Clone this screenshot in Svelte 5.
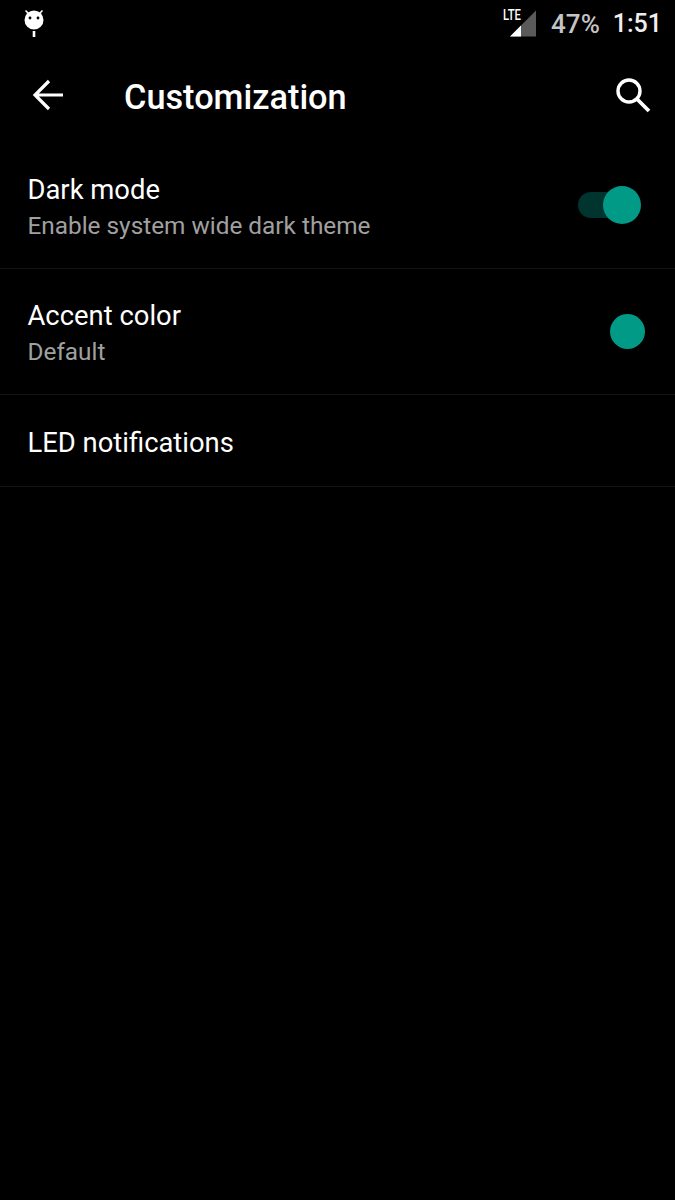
<script>
  const rows = [
    { title: 'Dark mode', sub: 'Enable system wide dark theme', control: 'switch' },
    { title: 'Accent color', sub: 'Default', control: 'dot' },
    { title: 'LED notifications' }
  ];
</script>

<div class="screen">
  <header class="status">
    <svg class="droid" width="24" height="32" viewBox="0 0 24 32" aria-hidden="true">
      <path d="M3.500 1.500 L7.500 5.500 M20.500 1.500 L16.500 5.500" stroke="#fff" stroke-width="1.600" fill="none" />
      <circle cx="12" cy="11" r="9.500" fill="#fff" />
      <circle cx="8" cy="9" r="1.400" fill="#000" />
      <circle cx="16" cy="9" r="1.400" fill="#000" />
      <rect x="10.700" y="22" width="2.600" height="6" fill="#fff" />
    </svg>
    <div class="status-right">
      <div class="signal">
        <span class="lte">LTE</span>
        <svg width="28" height="27" viewBox="0 0 28 27" aria-hidden="true">
          <path d="M1 26.500 L27 0.500 V26.500 Z" fill="#5a5a5a" />
          <path d="M1 26.500 L12 15.500 V26.500 Z" fill="#fff" />
        </svg>
      </div>
      <span class="battery">47%</span>
      <span class="clock">1:51</span>
    </div>
  </header>

  <div class="toolbar">
    <svg class="back" width="34" height="34" viewBox="0 0 34 34" aria-hidden="true">
      <path d="M3 17 H31 M17 3 L3 17 L17 31" stroke="#fff" stroke-width="3.200" fill="none" />
    </svg>
    <h1>Customization</h1>
    <svg class="search" width="38" height="38" viewBox="0 0 38 38" aria-hidden="true">
      <circle cx="15" cy="15" r="11" stroke="#fff" stroke-width="3.400" fill="none" />
      <path d="M23 23 L35 35" stroke="#fff" stroke-width="3.800" fill="none" />
    </svg>
  </div>

  <div class="list">
    {#each rows as row}
      <div class="row" class:single={!row.sub}>
        <div class="text">
          <div class="title">{row.title}</div>
          {#if row.sub}<div class="sub">{row.sub}</div>{/if}
        </div>
        {#if row.control === 'switch'}
          <div class="switch"><span class="track"></span><span class="thumb"></span></div>
        {:else if row.control === 'dot'}
          <span class="dot"></span>
        {/if}
      </div>
    {/each}
  </div>
</div>

<style>
  :global(body) {
    margin: 0;
    background: #000;
  }
  .screen {
    width: 675px;
    height: 1200px;
    background: #000;
    color: #fff;
    font-family: Roboto, "Liberation Sans", sans-serif;
    overflow: hidden;
  }
  .status {
    height: 47px;
    display: flex;
    justify-content: space-between;
    align-items: flex-start;
    padding: 0 13px 0 22px;
    box-sizing: border-box;
  }
  .droid {
    margin-top: 9px;
  }
  .status-right {
    display: flex;
    align-items: center;
    margin-top: 10px;
    height: 28px;
  }
  .signal {
    position: relative;
    width: 34px;
    height: 28px;
    display: flex;
    justify-content: flex-end;
  }
  .lte {
    position: absolute;
    left: 0;
    top: -1px;
    font-size: 14.500px;
    line-height: 14px;
    font-weight: 500;
    transform: scaleX(0.78);
    transform-origin: left center;
  }
  .battery {
    margin-left: 14px;
    font-size: 26px;
    line-height: 28px;
    font-weight: 500;
    color: #c4c4c4;
  }
  .clock {
    margin-left: 13px;
    font-size: 25px;
    line-height: 28px;
    font-weight: 500;
    color: #eee;
  }
  .toolbar {
    height: 96px;
    display: flex;
    align-items: center;
    padding: 0 23px 0 32px;
  }
  h1 {
    flex: 1;
    margin: 4px 0 0 58px;
    font-size: 34.300px;
    font-weight: 500;
    line-height: 40px;
  }
  .row {
    box-sizing: border-box;
    height: 126px;
    display: flex;
    align-items: center;
    justify-content: space-between;
    padding: 0 30px 0 27.500px;
    border-bottom: 1px solid #141414;
  }
  .row.single {
    height: 92px;
  }
  .text {
    margin-top: 5px;
  }
  .title {
    font-size: 27.400px;
    line-height: 35px;
  }
  .sub {
    font-size: 24.350px;
    line-height: 35px;
    color: #a0a0a0;
  }
  .switch {
    position: relative;
    width: 63px;
    height: 38px;
    margin-right: 4px;
    margin-top: -1px;
  }
  .track {
    position: absolute;
    left: 0;
    top: 6px;
    width: 60px;
    height: 26px;
    border-radius: 13px;
    background: #00352f;
  }
  .thumb {
    position: absolute;
    right: 0;
    top: 0;
    width: 38px;
    height: 38px;
    border-radius: 50%;
    background: #009a87;
  }
  .dot {
    width: 35px;
    height: 35px;
    border-radius: 50%;
    background: #009a87;
    margin-top: -1px;
  }
</style>
